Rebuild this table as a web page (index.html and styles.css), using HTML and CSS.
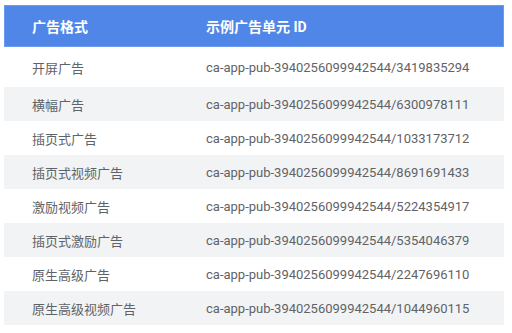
FILE: index.html
```html
<!DOCTYPE html>
<html lang="zh">
<head>
<meta charset="utf-8">
<link rel="stylesheet" href="styles.css">
</head>
<body>
<div class="table">
  <div class="row head"><div class="c1">广告格式</div><div class="c2">示例广告单元 ID</div></div>
  <div class="row first"><div class="c1">开屏广告</div><div class="c2">ca-app-pub-3940256099942544/3419835294</div></div>
  <div class="row alt"><div class="c1">横幅广告</div><div class="c2">ca-app-pub-3940256099942544/6300978111</div></div>
  <div class="row"><div class="c1">插页式广告</div><div class="c2">ca-app-pub-3940256099942544/1033173712</div></div>
  <div class="row alt"><div class="c1">插页式视频广告</div><div class="c2">ca-app-pub-3940256099942544/8691691433</div></div>
  <div class="row"><div class="c1">激励视频广告</div><div class="c2">ca-app-pub-3940256099942544/5224354917</div></div>
  <div class="row alt"><div class="c1">插页式激励广告</div><div class="c2">ca-app-pub-3940256099942544/5354046379</div></div>
  <div class="row"><div class="c1">原生高级广告</div><div class="c2">ca-app-pub-3940256099942544/2247696110</div></div>
  <div class="row alt"><div class="c1">原生高级视频广告</div><div class="c2">ca-app-pub-3940256099942544/1044960115</div></div>
</div>
</body>
</html>
```
FILE: styles.css
```css
html, body {
  margin: 0;
  padding: 0;
  background: #ffffff;
}
body {
  font-family: Roboto, "Noto Sans CJK SC", sans-serif;
  font-size: 13px;
  color: #5f6368;
}
.table {
  margin: 5px 0 0 4px;
  width: 500px;
  display: flex;
  flex-direction: column;
}
.row {
  display: flex;
  align-items: center;
  height: 34px;
}
.row.first {
  height: 40px;
}
.row.alt {
  background: #f1f3f4;
}
.row.head {
  height: 42px;
  background: #4f86e8;
  color: #ffffff;
  font-size: 14px;
  font-weight: 700;
  box-shadow: inset 0 0 0 1px #6c9af0;
}
.c1 {
  width: 174px;
  padding-left: 28px;
  white-space: nowrap;
}
.c2 {
  white-space: nowrap;
}
```
